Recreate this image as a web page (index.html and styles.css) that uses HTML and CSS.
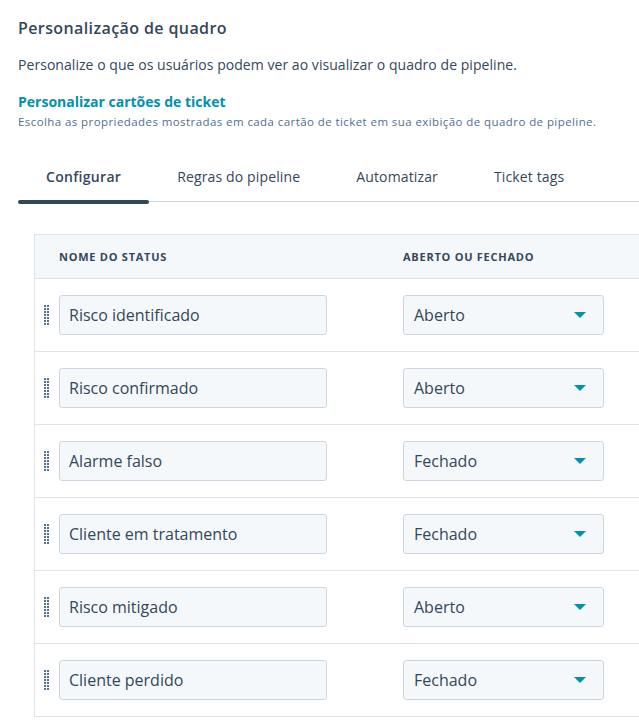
FILE: index.html
```html
<!DOCTYPE html>
<html lang="pt">
<head>
<meta charset="utf-8">
<title>Personalização de quadro</title>
<link rel="stylesheet" href="styles.css">
</head>
<body>
<div class="page">
  <h1 class="title">Personalização de quadro</h1>
  <p class="desc">Personalize o que os usuários podem ver ao visualizar o quadro de pipeline.</p>
  <a class="link" href="#">Personalizar cartões de ticket</a>
  <p class="help">Escolha as propriedades mostradas em cada cartão de ticket em sua exibição de quadro de pipeline.</p>

  <nav class="tabs">
    <span class="tab active">Configurar</span>
    <span class="tab">Regras do pipeline</span>
    <span class="tab">Automatizar</span>
    <span class="tab">Ticket tags</span>
  </nav>

  <div class="table">
    <div class="thead">
      <div class="th th-name">Nome do status</div>
      <div class="th">Aberto ou fechado</div>
    </div>

    <div class="row">
      <span class="handle"></span>
      <div class="input">Risco identificado</div>
      <div class="select"><span>Aberto</span><span class="caret"></span></div>
    </div>
    <div class="row">
      <span class="handle"></span>
      <div class="input">Risco confirmado</div>
      <div class="select"><span>Aberto</span><span class="caret"></span></div>
    </div>
    <div class="row">
      <span class="handle"></span>
      <div class="input">Alarme falso</div>
      <div class="select"><span>Fechado</span><span class="caret"></span></div>
    </div>
    <div class="row">
      <span class="handle"></span>
      <div class="input">Cliente em tratamento</div>
      <div class="select"><span>Fechado</span><span class="caret"></span></div>
    </div>
    <div class="row">
      <span class="handle"></span>
      <div class="input">Risco mitigado</div>
      <div class="select"><span>Aberto</span><span class="caret"></span></div>
    </div>
    <div class="row">
      <span class="handle"></span>
      <div class="input">Cliente perdido</div>
      <div class="select"><span>Fechado</span><span class="caret"></span></div>
    </div>
  </div>
</div>
</body>
</html>
```

FILE: styles.css
```css
html, body {
  margin: 0;
  padding: 0;
  background: #ffffff;
  overflow: hidden;
}

body {
  font-family: "Open Sans", "Noto Sans", sans-serif;
  color: #33475b;
}

.page {
  padding: 17px 0 0 18px;
  width: 700px;
}

.title {
  margin: 0;
  font-size: 16px;
  line-height: 22px;
  font-weight: 600;
  letter-spacing: 0.4px;
  color: #33475b;
}

.desc {
  margin: 16px 0 0;
  font-size: 14px;
  line-height: 20px;
  letter-spacing: 0.05px;
}

.link {
  display: block;
  margin-top: 17px;
  font-size: 14px;
  line-height: 20px;
  font-weight: 700;
  color: #0091ae;
  text-decoration: none;
}

.help {
  margin: 2px 0 0;
  font-size: 11.5px;
  line-height: 16px;
  letter-spacing: 0.42px;
  color: #516f90;
}

.tabs {
  display: flex;
  margin-top: 29px;
  border-bottom: 1px solid #cbd6e2;
  width: 621px;
}

.tab {
  padding: 8px 28px 14px;
  font-size: 14px;
  line-height: 20px;
  letter-spacing: 0.14px;
  color: #33475b;
  position: relative;
}

.tab.active {
  font-weight: 600;
  letter-spacing: 0.3px;
}

.tab.active::after {
  content: "";
  position: absolute;
  left: 0;
  right: 0;
  bottom: -3px;
  height: 4px;
  border-radius: 2px;
  background: #33475b;
}

.table {
  margin-top: 32px;
  margin-left: 16px;
  width: 640px;
  border-left: 1px solid #dfe3eb;
  border-top: 1px solid #dfe3eb;
}

.thead {
  display: flex;
  align-items: center;
  height: 43px;
  padding-left: 24px;
  background: #f5f8fa;
  border-bottom: 1px solid #dfe3eb;
}

.th {
  font-size: 11px;
  font-weight: 700;
  text-transform: uppercase;
  letter-spacing: 0.75px;
  color: #33475b;
}

.th-name {
  width: 344px;
}

.row {
  display: flex;
  align-items: center;
  height: 72px;
  padding-left: 9px;
  border-bottom: 1px solid #dfe3eb;
}

.handle {
  width: 5px;
  height: 20px;
  margin-right: 10px;
  background: #516f90;
  -webkit-mask: repeating-linear-gradient(to bottom, #000 0 2px, transparent 2px 3px),
                linear-gradient(to right, #000 0 2px, transparent 2px 3px, #000 3px 5px);
  -webkit-mask-composite: source-in;
  mask-composite: intersect;
}

.input,
.select {
  box-sizing: border-box;
  height: 40px;
  background: #f5f8fa;
  border: 1px solid #cbd6e2;
  border-radius: 3px;
  font-size: 16px;
  line-height: 38px;
  padding: 0 9px;
  color: #33475b;
}

.input {
  width: 268px;
}

.select {
  width: 201px;
  margin-left: 76px;
  display: flex;
  align-items: center;
  justify-content: space-between;
  padding-left: 10px;
  padding-right: 17px;
}

.caret {
  width: 0;
  height: 0;
  border-left: 6px solid transparent;
  border-right: 6px solid transparent;
  border-top: 6px solid #0091ae;
}
```
